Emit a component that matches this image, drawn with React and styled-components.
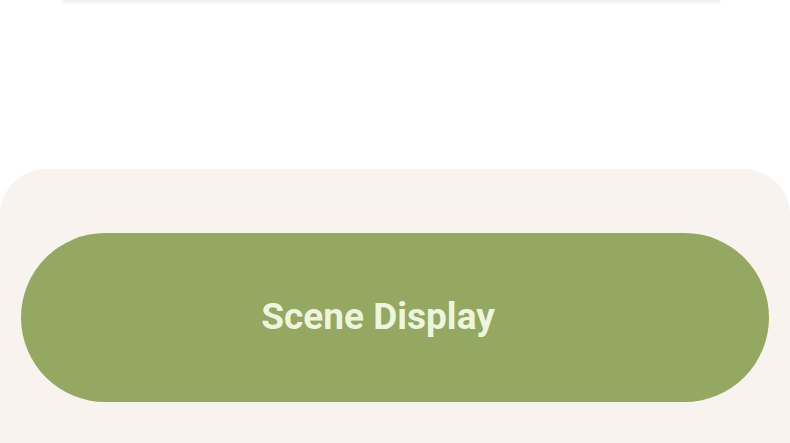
import styled, { createGlobalStyle } from "styled-components";

const GlobalStyle = createGlobalStyle`
  html, body {
    margin: 0;
    padding: 0;
    background: #ffffff;
    font-family: Roboto, "Liberation Sans", sans-serif;
    overflow: hidden;
  }
`;

const Page = styled.div`
  width: 790px;
  height: 443px;
  display: flex;
  flex-direction: column;
`;

const CardEdge = styled.div`
  width: 657px;
  height: 2px;
  margin-left: 63px;
  background: #f1f0ec;
  box-shadow: 0 1px 3px rgba(120, 120, 90, 0.12);
`;

const Panel = styled.div`
  margin-top: 167px;
  flex: 1;
  background: #f8f3ee;
  border-radius: 46px 46px 0 0;
  padding: 64px 21px 0;
`;

const SceneButton = styled.button`
  width: 100%;
  height: 169px;
  border: none;
  border-radius: 85px;
  background: #94a862;
  color: #edf5de;
  font-family: Roboto, "Liberation Sans", sans-serif;
  font-weight: 700;
  font-size: 37px;
  cursor: pointer;
  padding: 0 34px 3px 0;
`;

export default function App() {
  return (
    <>
      <GlobalStyle />
      <Page>
        <CardEdge />
        <Panel>
          <SceneButton>Scene Display</SceneButton>
        </Panel>
      </Page>
    </>
  );
}
